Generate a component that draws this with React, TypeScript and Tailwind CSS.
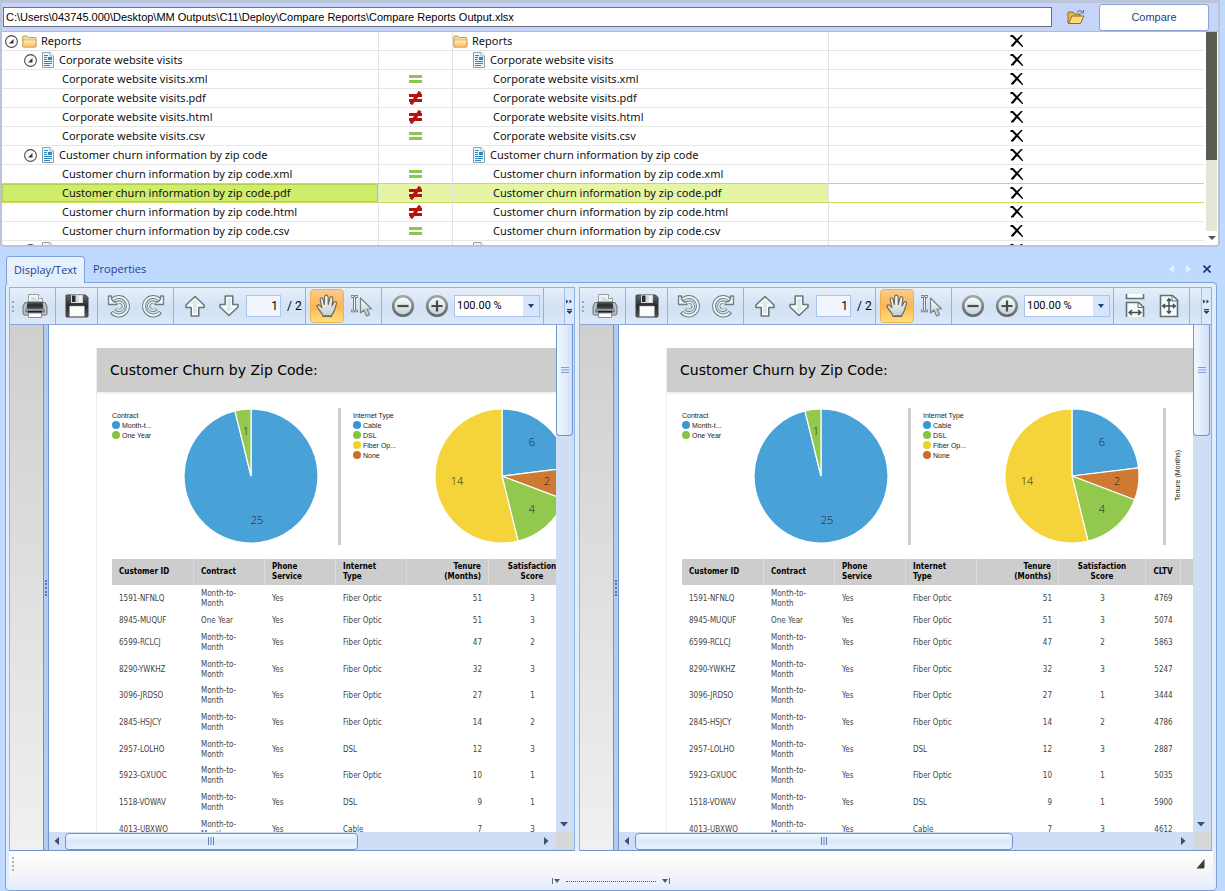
import React from "react";

/* ---------- tree icons ---------- */

const Expander = () => (
  <svg width="13" height="13" viewBox="0 0 13 13" className="shrink-0" aria-hidden="true">
    <circle cx="6.5" cy="6.5" r="5.9" fill="#fff" stroke="#4a4a4a" strokeWidth="1.1" />
    <path d="M8.5 4v4.5H4z" fill="#333" />
  </svg>
);

const FolderIcon = () => (
  <svg width="15" height="13" viewBox="0 0 15 13" className="shrink-0" aria-hidden="true">
    <defs>
      <linearGradient id="folder" x1="0" y1="0" x2="0" y2="1">
        <stop offset="0" stopColor="#fff3c4" />
        <stop offset="1" stopColor="#f5bd62" />
      </linearGradient>
    </defs>
    <path d="M.8 11V2Q.8 1 1.800 1H5l1.500 1.500H13q1 0 1 1V11q0 1-1 1H1.800Q.8 12 .8 11z" fill="#f7dc9a" stroke="#c39a52" />
    <path d="M.8 11.500 1.200 5h12.600v6q0 1-1 1H1.500z" fill="url(#folder)" stroke="#d2a257" strokeWidth=".7" />
  </svg>
);

const ReportIcon = () => (
  <span className="flex w-[14px] shrink-0 justify-center">
    <svg width="12" height="16" viewBox="0 0 12 16" aria-hidden="true">
      <path d="M.5.500h7.500l3.500 3.500v11.500H.5z" fill="#eef7fc" stroke="#8aa0ab" />
      <path d="M8 .5V4h3.500" fill="#fff" stroke="#8aa0ab" strokeWidth=".8" />
      <path d="M2 3.500h4M2 5.500h3M2 7.500h3M2 9.500h8M2 11.500h8M2 13.500h6" stroke="#2c86b8" strokeWidth="1" />
      <path d="M6 5h4v3H6z" fill="#2a86bd" />
    </svg>
  </span>
);

const EqualIcon = () => (
  <svg width="14" height="14" viewBox="0 0 14 14" className="mx-auto block" role="img" aria-label="Equal">
    <path d="M0 3h13v3H0zM0 8h13v3H0z" fill="#8cc84b" />
  </svg>
);

const NotEqualIcon = () => (
  <svg width="14" height="14" viewBox="0 0 14 14" className="mx-auto block" role="img" aria-label="Not equal">
    <path d="M0 3h13v3H0zM0 8h13v3H0z" fill="#b51212" />
    <path d="M11.200.800 1.800 13.200" stroke="#b51212" strokeWidth="3.400" />
  </svg>
);

const CrossIcon = () => (
  <svg width="14" height="14" viewBox="0 0 14 14" className="mx-auto block" role="img" aria-label="Missing">
    <path d="M.5 1h2.500l4 4 4-4h1.500v.6L8.200 6.300l3.300 4 1.500 1.900v.8h-.8L7 8 3.200 12.500H1v-1l4.500-5L2.200 3H.5z" fill="#000" />
  </svg>
);

/* ---------- toolbar icons ---------- */

const Defs = () => (
  <svg width="0" height="0" className="absolute" aria-hidden="true">
    <defs>
      <linearGradient id="metal" x1="0" y1="0" x2="0" y2="1">
        <stop offset="0" stopColor="#fbfdfd" />
        <stop offset="1" stopColor="#c3ced0" />
      </linearGradient>
      <linearGradient id="dark" x1="0" y1="0" x2="0" y2="1">
        <stop offset="0" stopColor="#65686b" />
        <stop offset=".5" stopColor="#26282a" />
        <stop offset="1" stopColor="#55585b" />
      </linearGradient>
      <linearGradient id="ring" x1="0" y1="0" x2="0" y2="1">
        <stop offset="0" stopColor="#9aa5a8" />
        <stop offset="1" stopColor="#5d686b" />
      </linearGradient>
    </defs>
  </svg>
);

const PrinterIcon = () => (
  <svg width="26" height="26" viewBox="0 0 26 26">
    <path d="M6.500 9V1.500h10l4 4V9" fill="#f2f6f7" stroke="#94a0a4" />
    <path d="M16.500 1.500v4h4" fill="#fff" stroke="#94a0a4" />
    <path d="M9 5h5M9 7h8" stroke="#bcc8cb" />
    <path d="M3 9.500h20l2 4v7q0 1.500-1.500 1.500h-21Q1 22 1 20.500v-7z" fill="#b9c0c3" stroke="#6a7073" />
    <path d="M5.500 8.500h15l1 7.500h-17z" fill="url(#dark)" />
    <path d="M3 16.500h20v3H3z" fill="#7c8386" />
    <path d="M6 18h14v2H6z" fill="#202224" />
    <path d="M6.500 20h13v4.500h-13z" fill="#fff" stroke="#8a9093" />
  </svg>
);

const FloppyIcon = () => (
  <svg width="24" height="24" viewBox="0 0 24 24">
    <path d="M1.500 1h19L23 3.500V22q0 1-1 1H2q-1 0-1-1V1.500z" fill="url(#dark)" stroke="#3c3e40" />
    <path d="M6 1h12v8H6z" fill="#d4d9db" />
    <path d="M7 1.500h3.500V8H7z" fill="#2c2e30" />
    <path d="M14 2h2.500v6H14z" fill="#f5f7f7" />
    <path d="M4.500 12h15v10.500h-15z" fill="#fbfcfc" stroke="#8c9194" strokeWidth=".6" />
  </svg>
);

const RotateIcon = ({ flip = false }: { flip?: boolean }) => (
  <svg width="24" height="24" viewBox="0 0 24 24" className={flip ? "-scale-x-100" : ""}>
    <path d="M5 6A9.200 9.200 0 1 1 4.500 18" fill="none" stroke="#6b8083" strokeWidth="4" />
    <path d="M5 6A9.200 9.200 0 1 1 5.200 18.600" fill="none" stroke="#f0f6f6" strokeWidth="2" />
    <path d="M1.500 2v8.500h8.500V8L6.500 7.500 4.500 5V2z" fill="#eef4f5" stroke="#6b8083" strokeWidth="1.300" strokeLinejoin="round" />
    <path d="M9.500 8.800a4.200 4.200 0 1 1-.8 6" fill="none" stroke="#6b8083" strokeWidth="3.200" />
    <path d="M9.800 9.100a4 4 0 1 1-.6 5.600" fill="none" stroke="#eaf2f3" strokeWidth="1.500" />
  </svg>
);

const ArrowIcon = ({ down = false }: { down?: boolean }) => (
  <svg width="22" height="22" viewBox="0 0 22 22" className={down ? "-scale-y-100" : ""}>
    <path d="M11 1.500 20 10v2.500h-5.200V21H7.200v-8.500H2V10z" fill="#fafdfd" stroke="#66797b" strokeWidth="1.600" strokeLinejoin="round" />
    <path d="M11 4.500 15.500 9H13v9.500H9V9H6.500z" fill="#dfe8ea" />
  </svg>
);

const HandIcon = () => (
  <svg width="22" height="24" viewBox="0 0 22 24">
    <path
      d="M7 22.500Q6.500 19.500 4 17 1 13.500 1 11.500q1.200-1.500 3 .2l1.800 1.800L4.200 5.500Q4.300 3.500 6 4q.8.3 1.200 2l1.100 4.500L8.600 3q.5-2 2-1.800 1.400.2 1.500 2l.2 7.300 1.600-6.500q.6-1.700 1.900-1.300 1.300.5 1 2.300L16 12l1.700-3.500q.9-1.400 2.200-.8 1.100.7.400 2.600L18.500 16q-.9 3-2.500 4.700l-.5 1.800z"
      fill="url(#metal)"
      stroke="#75695a"
      strokeWidth="1.200"
      strokeLinejoin="round"
    />
    <path d="M7.500 22h8" stroke="#6b6558" strokeWidth="1.500" />
  </svg>
);

const TextSelectIcon = () => (
  <svg width="24" height="24" viewBox="0 0 24 24">
    <path d="M2 2.500h2.500l1 .8 1-.8H9M2 17h2.500l1-.8 1 .8H9M5.500 3v13.500" fill="none" stroke="#59666b" strokeWidth="2.600" />
    <path d="M2.500 2.500h2l1 .8 1-.8h2M2.500 17h2l1-.8 1 .8h2M5.500 3.300v13" fill="none" stroke="#f4f6f7" strokeWidth="1" />
    <path d="M11.500 4v15l3.500-3 2.500 6 3-1.300-2.500-5.700h4.500z" fill="url(#metal)" stroke="#79868c" strokeWidth="1.200" strokeLinejoin="round" />
  </svg>
);

const ZoomGlyph = ({ plus = false }: { plus?: boolean }) => (
  <svg width="24" height="24" viewBox="0 0 24 24">
    <circle cx="12" cy="12" r="9.800" fill="url(#metal)" stroke="url(#ring)" strokeWidth="2.600" />
    <path d={plus ? "M6.500 12h11M12 6.500v11" : "M6.500 12h11"} stroke="#454d50" strokeWidth="2.200" />
  </svg>
);

const FitWidthIcon = () => (
  <svg width="20" height="24" viewBox="0 0 20 24">
    <path d="M1.500 0v4.500h17V0" fill="#fff" stroke="#5f6f73" strokeWidth="1.600" />
    <path d="M1.500 23V8.500h12L18.500 13v10" fill="#f7fafa" stroke="#5f6f73" strokeWidth="1.600" />
    <path d="M13 8.500V13.500h5.500" fill="none" stroke="#5f6f73" />
    <path d="M5 18.500h10M7 16l-2.800 2.500L7 21M13 16l2.800 2.500L13 21" fill="none" stroke="#3f4c50" strokeWidth="1.500" />
  </svg>
);

const FitPageIcon = () => (
  <svg width="20" height="24" viewBox="0 0 20 24">
    <path d="M1.500 1.500h12L18.500 6v16.500h-17z" fill="#f7fafa" stroke="#5f6f73" strokeWidth="1.600" />
    <path d="M13 1.500V7h5.500" fill="none" stroke="#5f6f73" />
    <path d="M4 12h12M10 5v14M6 10l-2.300 2L6 14M14 10l2.300 2-2.300 2M8 7l2-2.300L12 7M8 17l2 2.300 2-2.300" fill="none" stroke="#3f4c50" strokeWidth="1.400" />
  </svg>
);

/* ---------- comparison tree ---------- */

type Level = "root" | "report" | "file";
type Row = { level: Level; name: string; match?: "eq" | "ne"; selected?: boolean };

const rows: Row[] = [
  { level: "root", name: "Reports" },
  { level: "report", name: "Corporate website visits" },
  { level: "file", name: "Corporate website visits.xml", match: "eq" },
  { level: "file", name: "Corporate website visits.pdf", match: "ne" },
  { level: "file", name: "Corporate website visits.html", match: "ne" },
  { level: "file", name: "Corporate website visits.csv", match: "eq" },
  { level: "report", name: "Customer churn information by zip code" },
  { level: "file", name: "Customer churn information by zip code.xml", match: "eq" },
  { level: "file", name: "Customer churn information by zip code.pdf", match: "ne", selected: true },
  { level: "file", name: "Customer churn information by zip code.html", match: "ne" },
  { level: "file", name: "Customer churn information by zip code.csv", match: "eq" },
  { level: "report", name: "" },
];

const leftPad = { root: "pl-[3px]", report: "pl-[22px]", file: "pl-[60px]" };
const rightPad = { root: "pl-0", report: "pl-[19px]", file: "pl-[40px]" };

function TreeRow({ row, beforeSelected }: { row: Row; beforeSelected: boolean }) {
  const line = row.selected || beforeSelected ? "border-b-[#c9dc5a]" : "border-b-[#e6e6e6]";
  const cell = `border-b border-r border-r-[#e3e3e3] p-0 ${line}`;
  const icon = row.level === "root" ? <FolderIcon /> : row.level === "report" ? <ReportIcon /> : null;
  return (
    <tr className="h-[19px]">
      <td className={`${cell} ${row.selected ? "bg-[#cfec6b] shadow-[inset_0_0_0_1px_#b5d04c]" : ""}`}>
        <div className={`flex h-[18px] items-center gap-1 whitespace-nowrap ${leftPad[row.level]}`}>
          {row.level !== "file" && (
            <button type="button" aria-label="Collapse">
              <Expander />
            </button>
          )}
          {icon}
          <span>{row.name}</span>
        </div>
      </td>
      <td className={`${cell} ${row.selected ? "bg-[#e5f5a3]" : ""}`}>
        {row.match === "eq" && <EqualIcon />}
        {row.match === "ne" && <NotEqualIcon />}
      </td>
      <td className={`${cell} ${row.selected ? "bg-[#e5f5a3]" : ""}`}>
        <div className={`flex h-[18px] items-center gap-1 whitespace-nowrap ${rightPad[row.level]}`}>
          {icon}
          <span>{row.name}</span>
        </div>
      </td>
      <td className={`border-b p-0 ${line}`}>
        <CrossIcon />
      </td>
    </tr>
  );
}

function ComparePanel() {
  return (
    <section className="mr-[5px] flex flex-col rounded-b border-2 border-t-[3px] border-[#b9c4d6] bg-white">
      <form className="flex h-7 items-center bg-[#c7d4fa] pl-px" onSubmit={(e) => e.preventDefault()}>
        <input
          type="text"
          aria-label="Output file"
          defaultValue="C:\Users\043745.000\Desktop\MM Outputs\C11\Deploy\Compare Reports\Compare Reports Output.xlsx"
          className="h-5 min-w-0 flex-1 border border-[#6a6f80] bg-white px-[2px] font-['Liberation_Sans',sans-serif] text-[11px] text-black outline-none"
        />
        <button type="button" aria-label="Browse" className="flex w-[47px] items-center justify-center">
          <svg width="18" height="16" viewBox="0 0 18 16">
            <path d="M1 14V3.500Q1 3 1.500 3H6l1.500 2H13v9z" fill="#e7b64f" stroke="#8f6b24" />
            <path d="M1.500 14.500 5 7h12l-3.500 7.500z" fill="#fbd978" stroke="#8f6b24" />
            <path d="M10 3q3-3 5.500 0M16.500 1v3h-3" fill="none" stroke="#4a68a8" />
          </svg>
        </button>
        <button type="submit" className="h-[27px] w-[110px] rounded-[3px] border border-[#8ea3cf] bg-white font-['Liberation_Sans',sans-serif] text-[11px] text-[#1f3f77]">
          Compare
        </button>
        <span className="w-[9px]" />
      </form>
      <div className="flex h-[214px] border-t border-[#b5bcc6]">
        <div className="min-w-0 flex-1 overflow-hidden">
          <table className="w-full table-fixed border-separate border-spacing-0 font-['Noto_Sans',sans-serif] text-[11px] leading-[18px] text-[#111]">
            <colgroup>
              <col className="w-[377px]" />
              <col className="w-[74px]" />
              <col className="w-[376px]" />
              <col />
            </colgroup>
            <tbody>
              {rows.map((row, i) => (
                <TreeRow key={i} row={row} beforeSelected={Boolean(rows[i + 1]?.selected)} />
              ))}
            </tbody>
          </table>
        </div>
        <div className="ml-[2px] mr-px flex w-[11px] flex-col">
          <div className="h-32 bg-[#585a54]" />
          <div className="flex-1 bg-[#e4e7d6]" />
          <button type="button" aria-label="Scroll down" className="flex h-[14px] items-center justify-center">
            <svg width="8" height="4" viewBox="0 0 8 4">
              <path d="M0 0h8L4 4z" fill="#555" />
            </svg>
          </button>
        </div>
      </div>
    </section>
  );
}

/* ---------- report page ---------- */

type Slice = { value: number; color: string; label: [number, number] };

function Pie({ slices, title }: { slices: Slice[]; title: string }) {
  const total = slices.reduce((s, x) => s + x.value, 0);
  const point = (t: number) => {
    const a = t * Math.PI * 2;
    return `${67 + 67 * Math.sin(a)} ${67 - 67 * Math.cos(a)}`;
  };
  let at = 0;
  return (
    <svg width="134" height="134" viewBox="0 0 134 134" className="shrink-0" role="img" aria-label={title}>
      {slices.map((s) => {
        const from = at;
        at += s.value / total;
        return (
          <path
            key={s.color}
            d={`M67 67L${point(from)}A67 67 0 ${s.value / total > 0.5 ? 1 : 0} 1 ${point(at)}Z`}
            fill={s.color}
            stroke="#fff"
            strokeWidth="1.200"
          />
        );
      })}
      {slices.map((s) => (
        <text key={s.color} x={s.label[0]} y={s.label[1]} textAnchor="middle" fontSize="11" fontWeight="300" fontFamily="Open Sans, sans-serif" fill="#222">
          {s.value}
        </text>
      ))}
    </svg>
  );
}

const contractSlices: Slice[] = [
  { value: 25, color: "#48a2d8", label: [73, 115] },
  { value: 1, color: "#92c84e", label: [62, 26] },
];

const internetSlices: Slice[] = [
  { value: 6, color: "#48a2d8", label: [97, 37] },
  { value: 2, color: "#cf7a32", label: [112, 76] },
  { value: 4, color: "#92c84e", label: [97, 104] },
  { value: 14, color: "#f4d43a", label: [22, 76] },
];

function Legend({ title, items }: { title: string; items: [string, string][] }) {
  return (
    <div className="shrink-0 whitespace-nowrap pt-[3px] font-['Liberation_Sans',sans-serif] text-[7px] leading-[9px] text-[#222]">
      <div>{title}</div>
      <ul>
        {items.map(([dot, name]) => (
          <li key={name} className="flex h-[10px] items-center gap-[2px]">
            <span className={`size-2 rounded-full ${dot}`} />
            {name}
          </li>
        ))}
      </ul>
    </div>
  );
}

const customers = [
  ["1591-NFNLQ", "Month-to-Month", "Fiber Optic", "51", "3", "4769"],
  ["8945-MUQUF", "One Year", "Fiber Optic", "51", "3", "5074"],
  ["6599-RCLCJ", "Month-to-Month", "Fiber Optic", "47", "2", "5863"],
  ["8290-YWKHZ", "Month-to-Month", "Fiber Optic", "32", "3", "5247"],
  ["3096-JRDSO", "Month-to-Month", "Fiber Optic", "27", "1", "3444"],
  ["2845-HSJCY", "Month-to-Month", "Fiber Optic", "14", "2", "4786"],
  ["2957-LOLHO", "Month-to-Month", "DSL", "12", "3", "2887"],
  ["5923-GXUOC", "Month-to-Month", "Fiber Optic", "10", "1", "5035"],
  ["1518-VOWAV", "Month-to-Month", "DSL", "9", "1", "5900"],
  ["4013-UBXWO", "Month-to-Month", "Cable", "7", "3", "4612"],
];

function ReportPage() {
  const head = "border-r border-[#dadada] px-[7px] py-0 font-bold text-black";
  return (
    <div className="ml-[47px] mt-[23px] w-[720px] border-l border-[#eeeeee]">
      <h1 className="flex h-[46px] items-center border-b-2 border-[#f2f2f2] bg-[#cdcdcd] bg-clip-padding pl-[13px] font-['DejaVu_Sans',sans-serif] text-[14px] text-black">
        Customer Churn by Zip Code:
      </h1>
      <div className="flex h-[165px] pl-[15px] pt-[14px]">
        <div className="w-[72px] shrink-0">
          <Legend title="Contract" items={[["bg-[#3798d6]", "Month-t..."], ["bg-[#86c440]", "One Year"]]} />
        </div>
        <div className="pt-px">
          <Pie slices={contractSlices} title="Contract" />
        </div>
        <div className="ml-5 mr-3 h-[137px] w-[3px] shrink-0 bg-[#cdcdcd]" />
        <div className="w-[82px] shrink-0">
          <Legend
            title="Internet Type"
            items={[
              ["bg-[#3798d6]", "Cable"],
              ["bg-[#86c440]", "DSL"],
              ["bg-[#f2d024]", "Fiber Op..."],
              ["bg-[#c96f26]", "None"],
            ]}
          />
        </div>
        <div className="pt-px">
          <Pie slices={internetSlices} title="Internet Type" />
        </div>
        <div className="ml-6 h-[137px] w-[3px] shrink-0 bg-[#cdcdcd]" />
        <div className="ml-[7px] flex h-[134px] items-center justify-center font-['Liberation_Sans',sans-serif] text-[7px] leading-[9px] text-[#222]">
          <span className="rotate-180 whitespace-nowrap [writing-mode:vertical-rl]">Tenure (Months)</span>
        </div>
      </div>
      <table className="ml-[15px] w-[620px] table-fixed border-separate border-spacing-0 text-left font-['DejaVu_Sans_Condensed','DejaVu_Sans',sans-serif] text-[8px] leading-[10px] text-[#444]">
        <colgroup>
          <col className="w-[82px]" />
          <col className="w-[71px]" />
          <col className="w-[71px]" />
          <col className="w-[71px]" />
          <col className="w-[82px]" />
          <col className="w-[87px]" />
          <col className="w-[35px]" />
          <col />
        </colgroup>
        <thead>
          <tr className="h-[26px] bg-[#cdcdcd]">
            <th className={head}>Customer ID</th>
            <th className={head}>Contract</th>
            <th className={head}>Phone<br />Service</th>
            <th className={head}>Internet<br />Type</th>
            <th className={`${head} text-right`}>Tenure<br />(Months)</th>
            <th className="border-r border-[#dadada] p-0 text-center font-bold text-black">Satisfaction<br />Score</th>
            <th className="border-r border-[#dadada] p-0 text-center font-bold text-black">CLTV</th>
            <th className="p-0" />
          </tr>
        </thead>
        <tbody>
          {customers.map(([id, contract, net, tenure, score, cltv]) => (
            <tr key={id} className={contract === "One Year" ? "h-[17px]" : "h-[27px] nth-[3n+2]:h-[26px]"}>
              <td className="px-[7px] py-0">{id}</td>
              <td className="py-0 pl-[7px] pr-5">{contract}</td>
              <td className="px-[7px] py-0">Yes</td>
              <td className="px-[7px] py-0">{net}</td>
              <td className="px-[7px] py-0 text-right">{tenure}</td>
              <td className="p-0 text-center">{score}</td>
              <td className="p-0 text-center">{cltv}</td>
              <td className="p-0" />
            </tr>
          ))}
        </tbody>
      </table>
    </div>
  );
}

/* ---------- document viewer ---------- */

const Sep = () => <span className="ml-[3px] mr-1 h-full w-px shrink-0 bg-[#8fb3e6]" />;

function ToolButton({ label, active, children }: { label: string; active?: boolean; children: React.ReactNode }) {
  return (
    <button
      type="button"
      aria-label={label}
      className={`flex h-[34px] w-[34px] shrink-0 items-center justify-center ${
        active ? "rounded-sm border border-[#f0b250] bg-gradient-to-b from-[#fbcb88] via-[#fdb550] to-[#fde07c]" : ""
      }`}
    >
      {children}
    </button>
  );
}

function Toolbar({ id, fitButtons }: { id: string; fitButtons: boolean }) {
  return (
    <div
      role="toolbar"
      className="flex h-9 shrink-0 items-center overflow-hidden bg-gradient-to-b from-[#e6effa] from-0% via-[#d2e1f4] via-55% to-[#dbe8f8] to-100% font-['Roboto',sans-serif] text-[12px] text-black"
    >
      <span className="ml-[2px] mr-1 h-[11px] w-[2px] shrink-0 border-l-2 border-dotted border-[#8aa9dc]" />
      <ToolButton label="Print"><PrinterIcon /></ToolButton>
      <Sep />
      <ToolButton label="Save"><FloppyIcon /></ToolButton>
      <Sep />
      <ToolButton label="Rotate left"><RotateIcon /></ToolButton>
      <ToolButton label="Rotate right"><RotateIcon flip /></ToolButton>
      <Sep />
      <ToolButton label="Previous page"><ArrowIcon /></ToolButton>
      <ToolButton label="Next page"><ArrowIcon down /></ToolButton>
      <input
        type="text"
        aria-label="Page"
        id={`${id}-page`}
        defaultValue="1"
        className="h-[22px] w-[35px] shrink-0 border border-[#a9c4ee] bg-[#f1f6fe] pr-[2px] text-right outline-none"
      />
      <span className="w-[21px] shrink-0 whitespace-nowrap pl-[6px]">/ 2</span>
      <Sep />
      <ToolButton label="Hand tool" active><HandIcon /></ToolButton>
      <ToolButton label="Select text"><TextSelectIcon /></ToolButton>
      <Sep />
      <ToolButton label="Zoom out"><ZoomGlyph /></ToolButton>
      <ToolButton label="Zoom in"><ZoomGlyph plus /></ToolButton>
      <div className="relative h-[22px] w-[86px] shrink-0">
        <select
          aria-label="Zoom level"
          id={`${id}-zoom`}
          className="h-full w-full appearance-none border border-[#a9c4ee] bg-white pl-[2px] text-[11px] outline-none"
        >
          <option>100.00 %</option>
        </select>
        <span className="pointer-events-none absolute inset-y-px right-px flex w-4 items-center justify-center bg-[#d6e5fb]">
          <svg width="6" height="4" viewBox="0 0 6 4">
            <path d="M0 0h6L3 4z" fill="#22407a" />
          </svg>
        </span>
      </div>
      <Sep />
      {fitButtons && (
        <>
          <ToolButton label="Fit width"><FitWidthIcon /></ToolButton>
          <ToolButton label="Fit page"><FitPageIcon /></ToolButton>
          <Sep />
        </>
      )}
      <button
        type="button"
        aria-label="More tools"
        className="ml-auto flex h-full w-[10px] shrink-0 items-center justify-center border-l border-[#9dbdea] bg-[#dce9fa]"
      >
        <svg width="7" height="16" viewBox="0 0 7 16">
          <path d="M0 1.500 2.500 3.500 0 5.500zM3.500 1.500 6 3.500l-2.500 2zM1 11h5v1.200H1zM.5 13h6L3.500 16z" fill="#1f3b78" />
        </svg>
      </button>
    </div>
  );
}

const triangles = {
  down: "M0 2h8L4 6.500z",
  left: "M6 0v8L1.500 4z",
  right: "M2 0v8l4.500-4z",
};

const ScrollArrow = ({ dir, label }: { dir: keyof typeof triangles; label: string }) => (
  <button type="button" aria-label={label} className="flex h-4 w-4 shrink-0 items-center justify-center">
    <svg width="8" height="8" viewBox="0 0 8 8">
      <path d={triangles[dir]} fill="#34507f" />
    </svg>
  </button>
);

function Viewer({ id, fitButtons }: { id: string; fitButtons: boolean }) {
  return (
    <section className="flex min-h-0 min-w-0 flex-col border border-[#8fb3e6] border-b-[#6f93cc]">
      <Toolbar id={id} fitButtons={fitButtons} />
      <div className="flex min-h-0 flex-1 border-t border-[#8aa8d8]">
        <div className="w-[33px] shrink-0 bg-gradient-to-b from-[#cfcfcf] to-[#f0f0f0]" />
        <div className="flex w-[6px] shrink-0 items-center justify-center border-x border-[#6f93cc] bg-[#b3cbee]">
          <span className="h-4 border-l-2 border-dotted border-[#4f78bd]" />
        </div>
        <div className="flex min-w-0 flex-1 flex-col">
          <div className="flex min-h-0 flex-1">
            <div className="min-w-0 flex-1 overflow-hidden bg-white">
              <ReportPage />
            </div>
            <div className="flex w-[18px] shrink-0 flex-col items-start bg-[#cfdef5]">
              <div className="flex h-[111px] w-[17px] items-center justify-center rounded-b-sm border border-t-0 border-[#6f93cc] bg-gradient-to-r from-[#f3f8ff] via-[#e2ecfb] to-[#d3e1f6] pb-5">
                <svg width="8" height="7" viewBox="0 0 8 7">
                  <path d="M0 .5h8M0 3h8M0 5.500h8" stroke="#7d9fd6" />
                </svg>
              </div>
              <span className="flex-1" />
              <ScrollArrow dir="down" label="Scroll down" />
            </div>
          </div>
          <div className="flex h-[18px] shrink-0 items-center bg-[#cfdef5]">
            <ScrollArrow dir="left" label="Scroll left" />
            <div className="flex min-w-0 flex-1">
              <div
                className={`flex h-[17px] items-center justify-center rounded-sm border border-[#6f93cc] bg-gradient-to-b from-[#f3f8ff] via-[#d9e7fb] to-[#eaf2fd] ${
                  fitButtons ? "w-[70%]" : "w-[62%]"
                }`}
              >
                <svg width="7" height="8" viewBox="0 0 7 8">
                  <path d="M.5 0v8M3 0v8M5.500 0v8" stroke="#5f82c0" />
                </svg>
              </div>
            </div>
            <ScrollArrow dir="right" label="Scroll right" />
            <span className="ml-[2px] h-full w-[18px] shrink-0 bg-[#d6d7d8]" />
          </div>
        </div>
      </div>
    </section>
  );
}

export default function App() {
  return (
    <main className="flex h-screen flex-col overflow-hidden bg-[#c0daff]">
      <Defs />
      <ComparePanel />
      <nav className="mx-[5px] mt-[9px] flex h-[26px] items-stretch font-['Open_Sans',sans-serif] text-[11px] text-[#1d3f91]">
        <button type="button" className="relative z-10 -mb-px ml-px w-[79px] rounded-t border border-b-0 border-[#7da2dc] bg-gradient-to-b from-[#eaf3ff] to-[#e3eefc]">
          Display/Text
        </button>
        <button type="button" className="px-2">Properties</button>
        <div className="ml-auto mr-[9px] flex items-center gap-3">
          <button type="button" aria-label="Previous tab">
            <svg width="5" height="8" viewBox="0 0 5 8"><path d="M5 0v8L0 4z" fill="#e4f0ff" /></svg>
          </button>
          <button type="button" aria-label="Next tab">
            <svg width="5" height="8" viewBox="0 0 5 8"><path d="M0 0v8l5-4z" fill="#e4f0ff" /></svg>
          </button>
          <button type="button" aria-label="Close">
            <svg width="8" height="8" viewBox="0 0 8 8"><path d="M.5.500l7 7M7.500.500l-7 7" stroke="#173a72" strokeWidth="1.700" /></svg>
          </button>
        </div>
      </nav>
      <div className="mx-[5px] mr-2 flex min-h-0 flex-1 flex-col rounded border border-[#7da2dc] bg-[#e3eefc] px-[3px] pt-1">
        <div className="grid min-h-0 flex-1 grid-cols-[566fr_633fr] grid-rows-1 gap-x-1 pr-px">
          <Viewer id="left" fitButtons={false} />
          <Viewer id="right" fitButtons />
        </div>
        <footer className="flex h-[39px] shrink-0 flex-col bg-gradient-to-b from-white via-[#f6f6f8] to-[#e5edfb]">
          <div className="flex h-[25px] items-center justify-between px-[3px]">
            <span className="h-[14px] border-l-2 border-dotted border-[#b4b4b4]" />
            <span className="flex w-[20px] items-center justify-center">
              <svg width="9" height="10" viewBox="0 0 9 10"><path d="M8.500 0v8q0 1.500-1.500 1.500H.5z" fill="#3b3b3b" /></svg>
            </span>
          </div>
          <div className="flex items-center justify-center gap-[6px] pt-[2px]">
            <svg width="8" height="6" viewBox="0 0 8 6"><path d="M.5 0v6" stroke="#5d6b85" /><path d="M2 1h6L5 5z" fill="#4c5b78" /></svg>
            <span className="w-[90px] border-t border-dotted border-[#4c5b78]" />
            <svg width="8" height="6" viewBox="0 0 8 6"><path d="M7.500 0v6" stroke="#5d6b85" /><path d="M0 1h6L3 5z" fill="#4c5b78" /></svg>
          </div>
        </footer>
      </div>
    </main>
  );
}
